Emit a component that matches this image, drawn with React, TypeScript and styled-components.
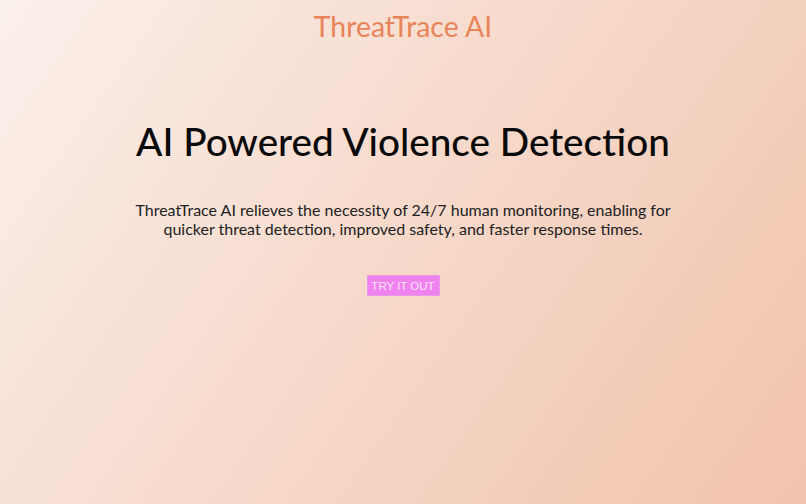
import React from "react";
import styled, { createGlobalStyle } from "styled-components";

const GlobalStyle = createGlobalStyle`
  html, body {
    margin: 0;
    padding: 0;
    height: 100%;
  }
  body {
    font-family: Lato, "Noto Sans", sans-serif;
  }
`;

function App() {
  return (
    <Page>
      <GlobalStyle />
      <Brand>ThreatTrace AI</Brand>
      <Hero>
        <Heading>AI Powered Violence Detection</Heading>
        <Blurb>
          ThreatTrace AI relieves the necessity of 24/7 human monitoring, enabling for
          <br />
          quicker threat detection, improved safety, and faster response times.
        </Blurb>
        <TryButton>TRY IT OUT</TryButton>
      </Hero>
    </Page>
  );
}

export default App;

const Page = styled.div`
  width: 100%;
  min-height: 504px;
  box-sizing: border-box;
  display: flex;
  flex-direction: column;
  align-items: center;
  background: linear-gradient(125deg, #faf0eb 0%, #f7ddd0 40%, #f1c3ac 100%);
`;

const Brand = styled.div`
  margin-top: 9px;
  font-size: 28.4px;
  color: #e8845a;
  line-height: 35px;
`;

const Hero = styled.div`
  display: flex;
  flex-direction: column;
  align-items: center;
  margin-top: 73px;
`;

const Heading = styled.h1`
  margin: 0;
  font-size: 38.7px;
  font-weight: 500;
  color: #0a0a0a;
  line-height: 48px;
`;

const Blurb = styled.p`
  margin: 35px 0 0;
  font-size: 16px;
  line-height: 19px;
  color: #222;
  text-align: center;
`;

const TryButton = styled.button`
  margin-top: 37px;
  width: 73px;
  height: 21px;
  padding: 0;
  border: 1px solid #e89ae8;
  background: #ef82ef;
  color: #f8e4f6;
  font-family: "Liberation Sans", Arial, sans-serif;
  font-size: 11.5px;
  cursor: pointer;
`;
